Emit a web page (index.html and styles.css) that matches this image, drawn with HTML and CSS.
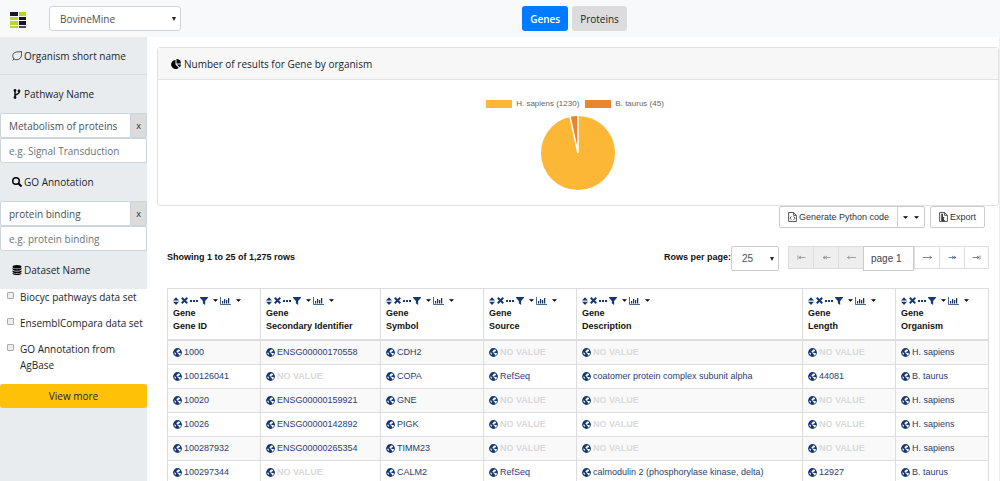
FILE: index.html
```html
<!DOCTYPE html>
<html lang="en">
<head>
<meta charset="utf-8">
<title>BovineMine data browser</title>
<link rel="stylesheet" href="styles.css">
</head>
<body>
<svg class="sprite" aria-hidden="true">
  <symbol id="globe" viewBox="0 0 16 16"><circle cx="8" cy="8" r="7.800" fill="currentColor"/><path fill="#fff" d="M9 2.500l3 .6.8 1.400-1.500 1.700-1.600.6-1 1.300 2.300.8 2-.2 1.200.9-.8 2.300-1.600 1.300-1.200-.5-.5-2.200-1.900-1.200-.4-1.600-1.200-.7-.4-1.600 1.500-1zM2.500 7.500l1.600 1 1.300 1.800-.7 1.700-.7.2C2.800 11 2.300 9.500 2.500 7.500z"/></symbol>
  <symbol id="sort" viewBox="0 0 12 16"><path fill="currentColor" d="M0 7l6-6.500L12 7zM0 9.500h12L6 16z"/></symbol>
  <symbol id="times" viewBox="0 0 14 14"><path stroke="currentColor" stroke-width="4" d="M1.500 1.500l11 11m0-11l-11 11"/></symbol>
  <symbol id="dots" viewBox="0 0 16 4"><path fill="currentColor" d="M0 0h4v4H0zm6 0h4v4H6zm6 0h4v4h-4z"/></symbol>
  <symbol id="filter" viewBox="0 0 14 14"><path fill="currentColor" d="M0 0h14v1.500L9 7v7l-4-3V7L0 1.500z"/></symbol>
  <symbol id="chart" viewBox="0 0 22 16"><path fill="none" stroke="currentColor" stroke-width="1.500" d="M1 0v15h21"/><path fill="currentColor" d="M4 8h2.500v5H4zm4-4h2.500v9H8zm4 2h2.500v7H12zm4-4h2.500v11H16z"/></symbol>
  <symbol id="caret" viewBox="0 0 10 5"><path fill="currentColor" d="M0 0h10L5 5z"/></symbol>
</svg>

<header class="topbar">
  <svg class="logo" viewBox="0 0 16 17" role="img" aria-label="InterMine"><path fill="#1c1526" d="M0 0h8v4H0zM9 5h7v3H9zM9 9h7v4H9z"/><path fill="#b7d433" d="M9 0h7v4H9zM0 5h8v3H0zM0 9h8v4H0zM0 14h8v2H0z"/><path fill="#4a4a52" d="M9 14h7v2H9z"/></svg>
  <div class="select mine"><select aria-label="Mine"><option>BovineMine</option></select></div>
  <nav class="views"><button class="btn active">Genes</button><button class="btn">Proteins</button></nav>
</header>

<div class="layout">
  <aside class="sidebar">
    <section>
      <h2 class="facet ruled"><svg class="ico" viewBox="0 0 20 20"><path fill="none" stroke="#222" stroke-width="1.600" d="M1 19l3-3C0 11 1 5 6 3c4-2 8-1 13-2 0 5 1 10-3 14-3 3-8 3-12 1"/></svg>Organism short name</h2>
    </section>
    <section>
      <h2 class="facet"><svg class="ico" viewBox="0 0 20 20"><path fill="none" stroke="#111" stroke-width="3" d="M6 4v13M14 5v2c0 4-8 3-8 7"/><g fill="#111"><circle cx="6" cy="3" r="2.800"/><circle cx="14" cy="4" r="2.800"/><circle cx="6" cy="17" r="2.800"/></g></svg>Pathway Name</h2>
      <div class="chosen"><input class="field" aria-label="Chosen pathway" value="Metabolism of proteins" readonly><button class="remove" aria-label="Remove pathway">x</button></div>
      <input class="field" aria-label="Pathway name" placeholder="e.g. Signal Transduction">
    </section>
    <section>
      <h2 class="facet"><svg class="ico" viewBox="0 0 20 20"><circle cx="8" cy="8" r="6.500" fill="none" stroke="#000" stroke-width="3"/><path stroke="#000" stroke-width="4" d="M12 12l7 7"/></svg>GO Annotation</h2>
      <div class="chosen"><input class="field" aria-label="Chosen annotation" value="protein binding" readonly><button class="remove" aria-label="Remove annotation">x</button></div>
      <input class="field" aria-label="GO annotation" placeholder="e.g. protein binding">
    </section>
    <section>
      <h2 class="facet"><svg class="ico" viewBox="0 0 20 20"><g fill="#000"><ellipse cx="10" cy="3.500" rx="9" ry="3.500"/><path d="M1 6c3 3 15 3 18 0v2.500c-2 4-16 4-18 0zM1 10.800c3 3 15 3 18 0v2.500c-2 4-16 4-18 0zM1 15.500c3 3 15 3 18 0V17c-2 4-16 4-18 0z"/></g></svg>Dataset Name</h2>
      <div class="datasets">
        <label class="check"><input type="checkbox"><span>Biocyc pathways data set</span></label>
        <label class="check"><input type="checkbox"><span>EnsemblCompara data set</span></label>
        <label class="check"><input type="checkbox"><span>GO Annotation from AgBase</span></label>
      </div>
      <button class="more">View more</button>
    </section>
  </aside>

  <main class="main">
    <section class="card">
      <h1 class="card-head"><svg class="ico" viewBox="0 0 20 20"><path d="M9 2v9l6.500 6.500A9 9 0 1 1 9 2z"/><path d="M11 0a9 9 0 0 1 9 9h-9z"/><path d="M12 11h8a9 9 0 0 1-2.500 5.500z"/></svg>Number of results for Gene by organism</h1>
      <div class="chart">
        <div class="legend"><span class="key sapiens"></span>H. sapiens (1230)<span class="key taurus"></span>B. taurus (45)</div>
        <svg class="pie" viewBox="0 0 76 76" role="img" aria-label="H. sapiens 1230, B. taurus 45"><circle cx="38" cy="38" r="37" fill="#fbb735"/><path fill="#e9862d" d="M38 38V1a37 37 0 0 0-8.200.900z"/><path fill="none" stroke="#fff" stroke-width="1.500" d="M38 38V0M38 38L29.800 1"/></svg>
      </div>
    </section>

    <div class="results">
      <div class="actions">
        <div class="group">
          <button class="tool"><svg class="doc" viewBox="0 0 16 18"><path fill="none" stroke="#333" stroke-width="1.500" d="M1 1h9l5 5v11H1zM10 1v5h5M6 8l-2.500 3L6 14m4-6l2.500 3L10 14"/></svg>Generate Python code</button>
          <button class="tool carets" aria-label="Choose language"><svg class="caret"><use href="#caret"/></svg><svg class="caret"><use href="#caret"/></svg></button>
        </div>
        <button class="tool"><svg class="doc" viewBox="0 0 16 18"><path fill="none" stroke="#333" stroke-width="1.500" d="M1 1h9l5 5v11H1zM10 1v5h5"/><path fill="#333" d="M4 3h3v6h3l-2 3 3 4H4z"/></svg>Export</button>
      </div>
      <div class="paging">
        <strong>Showing 1 to 25 of 1,275 rows</strong>
        <div class="pager">
          <label for="rows">Rows per page:</label>
          <div class="select rows"><select id="rows"><option>25</option></select></div>
          <nav class="pages" aria-label="Pages">
            <button disabled aria-label="First page"><svg class="arrow" viewBox="0 0 18 10"><path d="M2 1v8M17 5H4m4-3L4 5l4 3"/></svg></button>
            <button disabled aria-label="Back several pages"><svg class="arrow" viewBox="0 0 18 10"><path d="M17 5H2m4-3L2 5l4 3m4-6L6 5l4 3"/></svg></button>
            <button disabled aria-label="Previous page"><svg class="arrow" viewBox="0 0 18 10"><path d="M18 5H1m4-3L1 5l4 3"/></svg></button>
            <input value="page 1" aria-label="Current page">
            <button aria-label="Next page"><svg class="arrow" viewBox="0 0 18 10"><path d="M0 5h17m-4-3l4 3-4 3"/></svg></button>
            <button aria-label="Forward several pages"><svg class="arrow" viewBox="0 0 18 10"><path d="M1 5h15m-4-3l4 3-4 3M8 2l4 3-4 3"/></svg></button>
            <button aria-label="Last page"><svg class="arrow" viewBox="0 0 18 10"><path d="M16 1v8M1 5h13m-4-3l4 3-4 3"/></svg></button>
          </nav>
        </div>
      </div>

      <table class="table">
        <colgroup><col class="c-narrow"><col class="c-secondary"><col class="c-symbol"><col class="c-narrow"><col><col class="c-narrow"><col class="c-narrow"></colgroup>
        <thead><tr>
          <th><div class="tools"><button aria-label="Sort"><svg class="sort"><use href="#sort"/></svg></button><button aria-label="Remove"><svg class="times"><use href="#times"/></svg></button><button aria-label="Hide"><svg class="dots"><use href="#dots"/></svg></button><button class="drop" aria-label="Filter"><svg class="filter"><use href="#filter"/></svg><svg class="caret"><use href="#caret"/></svg></button><button class="drop" aria-label="Summary"><svg class="bars"><use href="#chart"/></svg><svg class="caret"><use href="#caret"/></svg></button></div>Gene<br>Gene ID</th>
          <th><div class="tools"><button aria-label="Sort"><svg class="sort"><use href="#sort"/></svg></button><button aria-label="Remove"><svg class="times"><use href="#times"/></svg></button><button aria-label="Hide"><svg class="dots"><use href="#dots"/></svg></button><button class="drop" aria-label="Filter"><svg class="filter"><use href="#filter"/></svg><svg class="caret"><use href="#caret"/></svg></button><button class="drop" aria-label="Summary"><svg class="bars"><use href="#chart"/></svg><svg class="caret"><use href="#caret"/></svg></button></div>Gene<br>Secondary Identifier</th>
          <th><div class="tools"><button aria-label="Sort"><svg class="sort"><use href="#sort"/></svg></button><button aria-label="Remove"><svg class="times"><use href="#times"/></svg></button><button aria-label="Hide"><svg class="dots"><use href="#dots"/></svg></button><button class="drop" aria-label="Filter"><svg class="filter"><use href="#filter"/></svg><svg class="caret"><use href="#caret"/></svg></button><button class="drop" aria-label="Summary"><svg class="bars"><use href="#chart"/></svg><svg class="caret"><use href="#caret"/></svg></button></div>Gene<br>Symbol</th>
          <th><div class="tools"><button aria-label="Sort"><svg class="sort"><use href="#sort"/></svg></button><button aria-label="Remove"><svg class="times"><use href="#times"/></svg></button><button aria-label="Hide"><svg class="dots"><use href="#dots"/></svg></button><button class="drop" aria-label="Filter"><svg class="filter"><use href="#filter"/></svg><svg class="caret"><use href="#caret"/></svg></button><button class="drop" aria-label="Summary"><svg class="bars"><use href="#chart"/></svg><svg class="caret"><use href="#caret"/></svg></button></div>Gene<br>Source</th>
          <th><div class="tools"><button aria-label="Sort"><svg class="sort"><use href="#sort"/></svg></button><button aria-label="Remove"><svg class="times"><use href="#times"/></svg></button><button aria-label="Hide"><svg class="dots"><use href="#dots"/></svg></button><button class="drop" aria-label="Filter"><svg class="filter"><use href="#filter"/></svg><svg class="caret"><use href="#caret"/></svg></button><button class="drop" aria-label="Summary"><svg class="bars"><use href="#chart"/></svg><svg class="caret"><use href="#caret"/></svg></button></div>Gene<br>Description</th>
          <th><div class="tools"><button aria-label="Sort"><svg class="sort"><use href="#sort"/></svg></button><button aria-label="Remove"><svg class="times"><use href="#times"/></svg></button><button aria-label="Hide"><svg class="dots"><use href="#dots"/></svg></button><button class="drop" aria-label="Filter"><svg class="filter"><use href="#filter"/></svg><svg class="caret"><use href="#caret"/></svg></button><button class="drop" aria-label="Summary"><svg class="bars"><use href="#chart"/></svg><svg class="caret"><use href="#caret"/></svg></button></div>Gene<br>Length</th>
          <th><div class="tools"><button aria-label="Sort"><svg class="sort"><use href="#sort"/></svg></button><button aria-label="Remove"><svg class="times"><use href="#times"/></svg></button><button aria-label="Hide"><svg class="dots"><use href="#dots"/></svg></button><button class="drop" aria-label="Filter"><svg class="filter"><use href="#filter"/></svg><svg class="caret"><use href="#caret"/></svg></button><button class="drop" aria-label="Summary"><svg class="bars"><use href="#chart"/></svg><svg class="caret"><use href="#caret"/></svg></button></div>Gene<br>Organism</th>
        </tr></thead>
        <tbody>
          <tr><td><a href="#"><svg class="globe"><use href="#globe"/></svg>1000</a></td><td><a href="#"><svg class="globe"><use href="#globe"/></svg>ENSG00000170558</a></td><td><a href="#"><svg class="globe"><use href="#globe"/></svg>CDH2</a></td><td><a href="#"><svg class="globe"><use href="#globe"/></svg><b>NO VALUE</b></a></td><td><a href="#"><svg class="globe"><use href="#globe"/></svg><b>NO VALUE</b></a></td><td><a href="#"><svg class="globe"><use href="#globe"/></svg><b>NO VALUE</b></a></td><td><a href="#"><svg class="globe"><use href="#globe"/></svg>H. sapiens</a></td></tr>
          <tr><td><a href="#"><svg class="globe"><use href="#globe"/></svg>100126041</a></td><td><a href="#"><svg class="globe"><use href="#globe"/></svg><b>NO VALUE</b></a></td><td><a href="#"><svg class="globe"><use href="#globe"/></svg>COPA</a></td><td><a href="#"><svg class="globe"><use href="#globe"/></svg>RefSeq</a></td><td><a href="#"><svg class="globe"><use href="#globe"/></svg>coatomer protein complex subunit alpha</a></td><td><a href="#"><svg class="globe"><use href="#globe"/></svg>44081</a></td><td><a href="#"><svg class="globe"><use href="#globe"/></svg>B. taurus</a></td></tr>
          <tr><td><a href="#"><svg class="globe"><use href="#globe"/></svg>10020</a></td><td><a href="#"><svg class="globe"><use href="#globe"/></svg>ENSG00000159921</a></td><td><a href="#"><svg class="globe"><use href="#globe"/></svg>GNE</a></td><td><a href="#"><svg class="globe"><use href="#globe"/></svg><b>NO VALUE</b></a></td><td><a href="#"><svg class="globe"><use href="#globe"/></svg><b>NO VALUE</b></a></td><td><a href="#"><svg class="globe"><use href="#globe"/></svg><b>NO VALUE</b></a></td><td><a href="#"><svg class="globe"><use href="#globe"/></svg>H. sapiens</a></td></tr>
          <tr><td><a href="#"><svg class="globe"><use href="#globe"/></svg>10026</a></td><td><a href="#"><svg class="globe"><use href="#globe"/></svg>ENSG00000142892</a></td><td><a href="#"><svg class="globe"><use href="#globe"/></svg>PIGK</a></td><td><a href="#"><svg class="globe"><use href="#globe"/></svg><b>NO VALUE</b></a></td><td><a href="#"><svg class="globe"><use href="#globe"/></svg><b>NO VALUE</b></a></td><td><a href="#"><svg class="globe"><use href="#globe"/></svg><b>NO VALUE</b></a></td><td><a href="#"><svg class="globe"><use href="#globe"/></svg>H. sapiens</a></td></tr>
          <tr><td><a href="#"><svg class="globe"><use href="#globe"/></svg>100287932</a></td><td><a href="#"><svg class="globe"><use href="#globe"/></svg>ENSG00000265354</a></td><td><a href="#"><svg class="globe"><use href="#globe"/></svg>TIMM23</a></td><td><a href="#"><svg class="globe"><use href="#globe"/></svg><b>NO VALUE</b></a></td><td><a href="#"><svg class="globe"><use href="#globe"/></svg><b>NO VALUE</b></a></td><td><a href="#"><svg class="globe"><use href="#globe"/></svg><b>NO VALUE</b></a></td><td><a href="#"><svg class="globe"><use href="#globe"/></svg>H. sapiens</a></td></tr>
          <tr><td><a href="#"><svg class="globe"><use href="#globe"/></svg>100297344</a></td><td><a href="#"><svg class="globe"><use href="#globe"/></svg><b>NO VALUE</b></a></td><td><a href="#"><svg class="globe"><use href="#globe"/></svg>CALM2</a></td><td><a href="#"><svg class="globe"><use href="#globe"/></svg>RefSeq</a></td><td><a href="#"><svg class="globe"><use href="#globe"/></svg>calmodulin 2 (phosphorylase kinase, delta)</a></td><td><a href="#"><svg class="globe"><use href="#globe"/></svg>12927</a></td><td><a href="#"><svg class="globe"><use href="#globe"/></svg>B. taurus</a></td></tr>
        </tbody>
      </table>
    </div>
  </main>
</div>
</body>
</html>
```
FILE: styles.css
```css
* { box-sizing: border-box; }
body { margin: 0; background: #fff; color: #212529; font: 10px/16px "Open Sans", "Noto Sans", sans-serif; }
button, input, select { font: inherit; color: inherit; margin: 0; }
button { cursor: pointer; }
svg { flex: none; }
.sprite { display: none; }

.topbar { display: flex; align-items: center; height: 37px; padding-left: 10px; background: #f8f9fa; }
.logo { width: 16px; height: 17px; margin-top: 3px; }
.select { position: relative; }
.select select { width: 100%; height: 25px; padding: 0 10px; border: 1px solid #ced4da; border-radius: 3px; background: #fff; color: #495057; appearance: none; }
.select::after { content: ""; position: absolute; right: 5px; top: 11px; border: 2px solid transparent; border-top: 4px solid #222; border-bottom: 0; pointer-events: none; }
.mine { width: 132px; margin-left: 23px; }
.views { display: flex; flex: 1; justify-content: center; gap: 4px; padding-right: 32px; }
.btn { height: 25px; padding: 0 8px; border: 0; border-radius: 3px; background: #dcdcdc; }
.btn.active { background: #007bff; color: #fff; font-weight: 600; }

.layout { display: flex; min-height: calc(100vh - 37px); }
.sidebar { flex: none; width: 147px; background: #e9ecef; }
.facet { display: flex; align-items: center; gap: 2px; height: 38px; margin: 0; padding-left: 12px; font-size: 10px; font-weight: 400; }
.ruled { border-bottom: 1px solid #dadde0; }
.ico { width: 10px; height: 10px; }
.field { display: block; width: 100%; min-width: 0; height: 25px; padding: 0 8px; border: 1px solid #ced4da; border-radius: 2px; background: #fff; color: #495057; }
.field::placeholder { color: #6c757d; opacity: 1; }
.chosen { display: flex; }
.remove { flex: none; width: 16px; padding: 0; border: 1px solid #ced4da; border-left: 0; border-radius: 0 2px 2px 0; background: #dcdcdc; font-size: 9px; }
.datasets { display: flex; flex-direction: column; gap: 10px; padding: 0 4px 11px 7px; background: #fff; }
.check { display: flex; gap: 6px; }
.check input { flex: none; width: 7px; height: 7px; margin-top: 3px; border: 1px solid #aaa; border-radius: 1px; background: #eee; appearance: none; }
.more { display: block; width: 100%; height: 24px; border: 0; border-radius: 3px; background: #ffc107; }

.main { flex: 1; min-width: 0; padding: 10px 0 0 10px; border-right: 1px solid #eee; }
.card { border: 1px solid #e2e2e2; border-radius: 3px; }
.card-head { display: flex; align-items: center; gap: 3px; height: 32px; margin: 0; padding-left: 13px; border-bottom: 1px solid #e2e2e2; background: #f7f7f7; font-size: 10px; font-weight: 400; }
.chart { display: flex; flex-direction: column; align-items: center; padding: 16px 0 14px; }
.legend { display: flex; align-items: center; gap: 4px; padding-right: 6px; color: #666; font: 8px/16px "Liberation Sans", Arial, sans-serif; }
.key { width: 26px; height: 8px; }
.sapiens { background: #fbb735; }
.taurus { margin-left: 2px; background: #e9862d; }
.pie { width: 76px; height: 76px; margin-top: 3px; }

.results { padding: 0 10px; font: 9px/13px "Liberation Sans", Arial, sans-serif; }
.actions { display: flex; justify-content: flex-end; gap: 5px; padding-right: 4px; }
.group { display: flex; }
.tool { display: flex; align-items: center; gap: 2px; height: 22px; padding: 0 8px; border: 1px solid #ccc; border-radius: 2px; background: #fff; color: #333; }
.group .tool:first-child { border-radius: 2px 0 0 2px; }
.group .carets { gap: 6px; padding: 0 5px; margin-left: -1px; border-radius: 0 2px 2px 0; }
.doc { width: 9px; height: 10px; }
.caret { width: 5px; height: 3px; color: #000; }
.paging { display: flex; justify-content: space-between; align-items: flex-start; padding: 18px 0 17px; line-height: 22px; color: #111; }
.pager { display: flex; font-weight: 700; }
.rows { width: 48px; margin-right: 9px; font: 10px/16px "Liberation Sans", Arial, sans-serif; }
.rows select { border-color: #ccc; border-radius: 2px; }
.pages { display: flex; align-items: flex-start; }
.pages button { display: flex; align-items: center; justify-content: center; width: 25px; height: 23px; padding: 0; border: 1px solid #ddd; border-right: 0; background: #fff; color: #4d5f85; }
.pages button:last-child { border-right: 1px solid #ddd; }
.pages button:disabled { background: #eee; color: #888; }
.pages input { width: 51px; height: 25px; padding: 0 7px; border: 1px solid #ccc; font-size: 10px; font-weight: 400; color: #444; }
.arrow { width: 9px; height: 5px; fill: none; stroke: currentColor; stroke-width: 1.500; }

.table { width: 100%; table-layout: fixed; border-collapse: collapse; color: #111; }
.c-narrow { width: 93px; }
.c-secondary { width: 120px; }
.c-symbol { width: 103px; }
.table th, .table td { border: 1px solid #ddd; text-align: left; vertical-align: middle; }
.table th { padding: 5px 5px 6px; border-bottom: 2px solid #ddd; }
.table td { height: 24px; padding: 0 5px; }
.table tbody tr:nth-child(odd) { background: #f9f9f9; }
.table a { display: flex; align-items: center; gap: 2px; color: #2a4070; text-decoration: none; white-space: nowrap; }
.table b { color: #d9d9d9; }
.globe { width: 9px; height: 9px; color: #17386f; }
.tools { display: flex; align-items: center; gap: 2px; height: 13px; }
.tools button { display: flex; align-items: center; padding: 0; border: 0; background: none; color: #17386f; }
.tools .drop { gap: 5px; }
.sort { width: 6px; height: 8px; }
.times { width: 7px; height: 7px; }
.dots { width: 8px; height: 2px; }
.filter { width: 8px; height: 8px; }
.bars { width: 11px; height: 8px; }
```
